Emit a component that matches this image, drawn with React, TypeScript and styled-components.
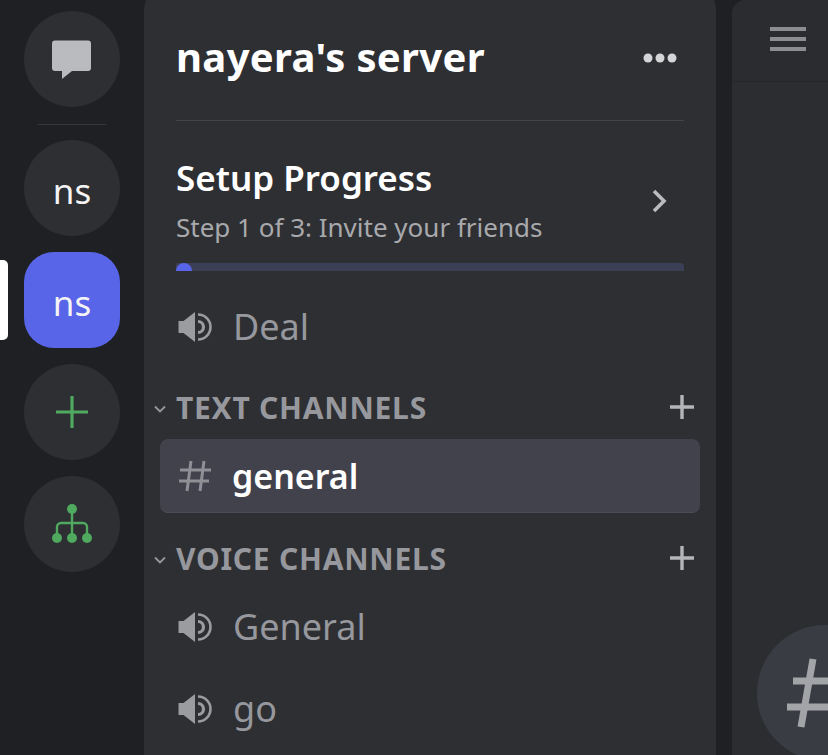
import React from "react";
import styled, { createGlobalStyle } from "styled-components";

const Global = createGlobalStyle`
  html, body { margin: 0; padding: 0; background: #1f2023; overflow: hidden; }
  * { box-sizing: border-box; }
  #root { width: 828px; height: 755px; overflow: hidden; }
`;

const Page = styled.div`
  width: 828px; height: 755px; display: flex; overflow: hidden;
  background: #1f2023; font-family: "Noto Sans", sans-serif;
`;

const Rail = styled.nav`
  width: 144px; flex-shrink: 0; padding-top: 11px; display: flex; flex-direction: column; align-items: center;
`;

const Slot = styled.div`
  position: relative; width: 144px; height: 96px; display: flex; justify-content: center; margin-bottom: 16px;
`;

const Pill = styled.span`
  position: absolute; left: 0; top: 8px; width: 8px; height: 80px; background: #fff; border-radius: 0 5px 5px 0;
`;

const ServerIcon = styled.div<{ $active?: boolean }>`
  width: 96px; height: 96px; display: flex; align-items: center; justify-content: center;
  border-radius: ${p => (p.$active ? "30px" : "50%")};
  background: ${p => (p.$active ? "#5865e8" : "#2e2f33")};
  color: #f4f4f5; font-size: 35px; line-height: 1;
`;

const ServerLabel = styled.span`
  margin-top: 4px;
`;

const Divider = styled.div`
  width: 68px; height: 1px; background: #36383d; margin: 1px 0 15px;
`;

const Panel = styled.aside`
  width: 572px; height: 800px; flex-shrink: 0; background: #2e2f33; border-radius: 22px 22px 0 0;
  margin-top: -12px; padding-top: 12px; display: flex; flex-direction: column;
`;

const Header = styled.header`
  height: 121px; margin: 0 32px; padding-bottom: 41px; border-bottom: 1px solid #424449;
  display: flex; align-items: flex-end; justify-content: space-between;
`;

const ServerName = styled.h1`
  margin: 0; font-size: 40px; line-height: 44px; font-weight: 700; letter-spacing: 0.35px; color: #fff;
`;

const Dots = styled.svg`
  width: 36px; height: 12px; margin: 0 6px 15px 0; fill: #d4d5d7;
`;

const Setup = styled.section`
  margin: 0 32px; padding-top: 34px; position: relative; height: 154px;
`;

const SetupTitle = styled.h2`
  margin: 0; font-size: 35px; line-height: 46px; font-weight: 600; color: #fff;
`;

const SetupStep = styled.p`
  margin: 8px 0 0; font-size: 26px; line-height: 36px; font-weight: 400; color: #a8a9ac;
`;

const Chevron = styled.svg`
  position: absolute; right: 16px; top: 68px; width: 18px; height: 24px; fill: none; stroke: #b9bbbe; stroke-width: 3.6;
`;

const Track = styled.div`
  margin-top: 18px; height: 8px; background: #3b4057; border-radius: 2px 4px 0 0; overflow: hidden;
`;

const Fill = styled.div`
  width: 16px; height: 8px; background: #5865e8; border-radius: 8px 8px 0 0;
`;

const VoiceRow = styled.div<{ $h: number }>`
  height: ${p => p.$h}px; padding-left: 34px; display: flex; align-items: center; gap: 21px;
  color: #96989d; font-size: 36px; line-height: 1;
`;

const Category = styled.div<{ $h: number }>`
  height: ${p => p.$h}px; display: flex; align-items: center; position: relative; padding-left: 32px;
  color: #96989d; font-size: 30px; font-weight: 700; letter-spacing: 0.75px;
`;

const Caret = styled.svg`
  position: absolute; left: 10px; top: 50%; margin-top: -2px; width: 12px; height: 8px; fill: none; stroke: #96989d; stroke-width: 1.8;
`;

const Plus = styled.svg`
  position: absolute; right: 21px; top: 50%; margin-top: -13px; width: 26px; height: 26px; stroke: #b3b5b8; stroke-width: 3.4;
`;

const ActiveRow = styled.div`
  height: 74px; margin: 4px 16px 0; border-radius: 8px; background: #41424c; border-bottom: 1px solid #4a4b55;
  display: flex; align-items: center; padding-left: 18px; gap: 19px; color: #fff; font-size: 34px; font-weight: 600;
`;

const Hash = styled.svg`
  width: 35px; height: 35px; stroke: #8e9096; stroke-width: 3; fill: none;
`;

const Spacer = styled.div`
  width: 16px; flex-shrink: 0; background: #1f2023;
`;

const Chat = styled.main`
  flex: 1; min-width: 0; background: #2c2d31; border-radius: 14px 0 0 0; overflow: hidden; display: flex; flex-direction: column;
`;

const ChatHeader = styled.div`
  height: 82px; flex-shrink: 0; padding: 26px 0 0 38px; background: #2b2c30; border-bottom: 1px solid #262729;
`;

const Burger = styled.svg`
  display: block; width: 36px; height: 26px; fill: #8b8d90;
`;

const ChatBody = styled.div`
  flex: 1; padding: 543px 0 0 25px; background: #2c2d31;
`;

const ChannelBadge = styled.div`
  width: 136px; height: 136px; flex-shrink: 0; border-radius: 50%; background: #3a3c44;
  display: flex; align-items: center; padding-left: 26px;
`;

const BigHash = styled.svg`
  width: 78px; height: 72px; flex-shrink: 0; stroke: #a3a4a8; stroke-width: 7; fill: none;
`;

const Speaker = styled.svg`
  width: 34px; height: 34px; flex-shrink: 0; fill: #9a9c9f;
`;

const SpeakerIcon = () => (
  <Speaker viewBox="0 0 34 34">
    <path d="M0.5 11 H5.5 L17 2 V32 L5.5 23 H0.5 Z" />
    <path d="M20 11.5 A5.5 5.5 0 0 1 20 22.5" fill="none" stroke="#9a9c9f" strokeWidth="3.2" />
    <path d="M20 4.5 A12.5 12.5 0 0 1 20 29.5" fill="none" stroke="#9a9c9f" strokeWidth="2.6" />
  </Speaker>
);

const CaretIcon = () => (
  <Caret viewBox="0 0 12 8"><path d="M1 1.5 L6 6.5 L11 1.5" /></Caret>
);

const PlusIcon = () => (
  <Plus viewBox="0 0 26 26"><path d="M13 1 V25 M1 13 H25" /></Plus>
);

export default function App() {
  return (
    <Page>
      <Global />
      <Rail>
        <Slot>
          <ServerIcon>
            <svg width="42" height="42" viewBox="0 0 42 42">
              <path fill="#b9bbbe" d="M4 2.5 H37 a3 3 0 0 1 3 3 V30 a3 3 0 0 1 -3 3 H21 L11 41 V33 H4 a3 3 0 0 1 -3 -3 V5.5 a3 3 0 0 1 3 -3 Z" />
            </svg>
          </ServerIcon>
        </Slot>
        <Divider />
        <Slot><ServerIcon><ServerLabel>ns</ServerLabel></ServerIcon></Slot>
        <Slot>
          <Pill />
          <ServerIcon $active><ServerLabel>ns</ServerLabel></ServerIcon>
        </Slot>
        <Slot>
          <ServerIcon>
            <svg width="34" height="34" viewBox="0 0 34 34" stroke="#4fa95f" strokeWidth="3.2">
              <path d="M17 1 V33 M1 17 H33" />
            </svg>
          </ServerIcon>
        </Slot>
        <Slot>
          <ServerIcon>
            <svg width="42" height="42" viewBox="0 0 42 42" fill="#4fa95f">
              <circle cx="21" cy="6" r="5" />
              <circle cx="6" cy="35" r="5" />
              <circle cx="21" cy="35" r="5" />
              <circle cx="36" cy="35" r="5" />
              <path d="M21 6 V35 M6 35 V24 a4 4 0 0 1 4 -4 H32 a4 4 0 0 1 4 4 V35" fill="none" stroke="#4fa95f" strokeWidth="2.4" />
            </svg>
          </ServerIcon>
        </Slot>
      </Rail>

      <Panel>
        <Header>
          <ServerName>nayera's server</ServerName>
          <Dots viewBox="0 0 36 12">
            <circle cx="6" cy="6" r="4.5" />
            <circle cx="18" cy="6" r="4.5" />
            <circle cx="30" cy="6" r="4.5" />
          </Dots>
        </Header>
        <Setup>
          <SetupTitle>Setup Progress</SetupTitle>
          <SetupStep>Step 1 of 3: Invite your friends</SetupStep>
          <Chevron viewBox="0 0 18 24"><path d="M4 2 L14 12 L4 22" /></Chevron>
          <Track><Fill /></Track>
        </Setup>
        <VoiceRow $h={104}>
          <SpeakerIcon />
          <span>Deal</span>
        </VoiceRow>
        <Category $h={56}>
          <CaretIcon />
          <span>TEXT CHANNELS</span>
          <PlusIcon />
        </Category>
        <ActiveRow>
          <Hash viewBox="0 0 35 35">
            <path d="M2 12 H33 M1 23 H31 M13 3 L9 33 M26 3 L22 33" />
          </Hash>
          <span>general</span>
        </ActiveRow>
        <Category $h={90}>
          <CaretIcon />
          <span>VOICE CHANNELS</span>
          <PlusIcon />
        </Category>
        <VoiceRow $h={48}>
          <SpeakerIcon />
          <span>General</span>
        </VoiceRow>
        <VoiceRow $h={116}>
          <SpeakerIcon />
          <span>go</span>
        </VoiceRow>
      </Panel>

      <Spacer />

      <Chat>
        <ChatHeader>
          <Burger viewBox="0 0 36 26">
            <rect x="0" y="1" width="36" height="4" />
            <rect x="0" y="11" width="36" height="4" />
            <rect x="0" y="21" width="36" height="4" />
          </Burger>
        </ChatHeader>
        <ChatBody>
          <ChannelBadge>
            <BigHash viewBox="0 0 78 72">
              <path d="M10 24 H78 M4 50 H78 M30 2 L18 70 M64 2 L52 70" />
            </BigHash>
          </ChannelBadge>
        </ChatBody>
      </Chat>
    </Page>
  );
}
